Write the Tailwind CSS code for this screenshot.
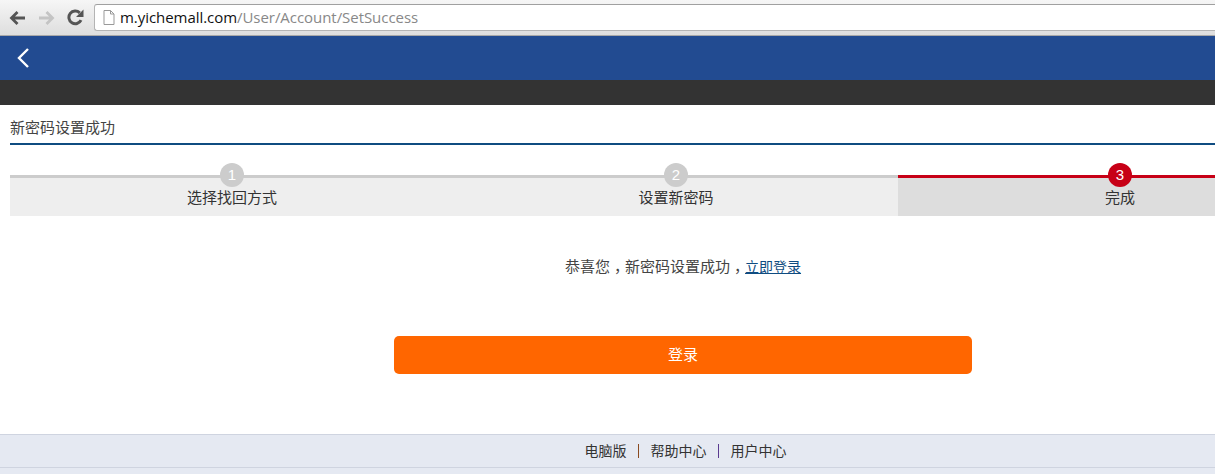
<!DOCTYPE html>
<html lang="zh-CN">
<head>
    <meta charset="UTF-8">
    <title>SetSuccess</title>
    <script src="https://cdn.jsdelivr.net/npm/@tailwindcss/browser@4"></script>
</head>
<body class="h-[474px] w-[1215px] overflow-hidden bg-white font-['Liberation_Sans','Noto_Sans_CJK_SC',sans-serif] text-[15px] text-[#333]">
    <!-- browser toolbar -->
    <div class="flex h-9 items-center border-b border-[#a8a8a8] bg-gradient-to-b from-[#f6f6f6] to-[#dedede] pl-[9px]">
        <svg class="h-[16px] w-[17px]" viewBox="0 0 17 16" fill="none" stroke="#555" stroke-width="2.8"><path d="M16 8H3.500M8.500 2 2.500 8l6 6"/></svg>
        <svg class="ml-[12px] h-[16px] w-[17px]" viewBox="0 0 17 16" fill="none" stroke="#c4c4c4" stroke-width="2.8"><path d="M1 8h12.500M8.500 2l6 6-6 6"/></svg>
        <svg class="ml-[12px] h-[17px] w-[17px]" viewBox="0 0 16 16" fill="none" stroke="#555" stroke-width="2.8"><path d="M13.200 10.500A6 6 0 1 1 12 3.600"/><path d="M15.500 .5v7h-7z" fill="#555" stroke="none"/></svg>
        <div class="ml-[10px] flex h-[27px] flex-1 items-center rounded-l-[3px] border border-r-0 border-[#b4b4b4] border-t-[#a0a0a0] bg-white pl-[8px]">
            <svg class="h-[15px] w-[12px]" viewBox="0 0 12 15" fill="#fff" stroke="#999"><path d="M1 .5h6.500L11 4v10.500H1zM7.500 .5V4H11"/></svg>
            <span class="ml-[5px] font-['Open_Sans'] text-[15px] tracking-[-0.05px] text-[#111]">m.yichemall.com<span class="text-[#888]">/User/Account/SetSuccess</span></span>
        </div>
    </div>

    <!-- page header -->
    <div class="flex h-[44px] items-center bg-[#224b91] pl-[17px]">
        <svg class="h-[20px] w-[12px]" viewBox="0 0 12 20" fill="none" stroke="#fff" stroke-width="2.400"><path d="M11 1 2 10l9 9"/></svg>
    </div>
    <div class="h-[25px] bg-[#333]"></div>

    <div class="w-[1366px]">
        <div class="ml-[10px] flex h-[40px] items-center border-b-2 border-[#0f4c81] pt-[8px] text-[#444]">新密码设置成功</div>

        <!-- steps -->
        <div class="ml-[10px] mt-[30px] grid w-[1332px] grid-cols-3">
            <div class="relative h-[41px] border-t-[3px] border-[#ccc] bg-[#eee] pt-[9px] text-center">
                <span class="absolute left-1/2 top-[-15px] flex h-6 w-6 -translate-x-1/2 items-center justify-center rounded-full bg-[#ccc] text-white">1</span>
                选择找回方式
            </div>
            <div class="relative h-[41px] border-t-[3px] border-[#ccc] bg-[#eee] pt-[9px] text-center">
                <span class="absolute left-1/2 top-[-15px] flex h-6 w-6 -translate-x-1/2 items-center justify-center rounded-full bg-[#ccc] text-white">2</span>
                设置新密码
            </div>
            <div class="relative h-[41px] border-t-[3px] border-[#c70016] bg-[#ddd] pt-[9px] text-center">
                <span class="absolute left-1/2 top-[-15px] flex h-6 w-6 -translate-x-1/2 items-center justify-center rounded-full bg-[#c70016] text-white">3</span>
                完成
            </div>
        </div>

        <!-- message -->
        <p class="mt-[41px] h-[20px] text-center leading-[20px] text-[#444]">恭喜您<span class="ml-[4px] tracking-[-4px]">，</span>新密码设置成功<span class="ml-[4px] tracking-[-4px]">，</span><a href="#" class="text-sm text-[#0f4c81] underline">立即登录</a></p>

        <button class="mx-auto mt-[59px] block h-[38px] w-[578px] rounded-[5px] bg-[#f60] pt-[1px] text-center text-white">登录</button>
    </div>

    <!-- footer -->
    <div class="mt-[60px] flex h-[34px] w-[1215px] items-center justify-center border-y border-[#cfd4e0] bg-[#e5e9f2] pl-[156px] text-sm text-[#333]">
        <a href="#">电脑版</a>
        <span class="ml-[11px] mr-[12px] h-[14px] w-px bg-[#8a4a20]"></span>
        <a href="#">帮助中心</a>
        <span class="ml-[11px] mr-[12px] h-[14px] w-px bg-[#5a3a90]"></span>
        <a href="#">用户中心</a>
    </div>
    <div class="h-[7px] bg-[#e5e9f2]"></div>
</body>
</html>
